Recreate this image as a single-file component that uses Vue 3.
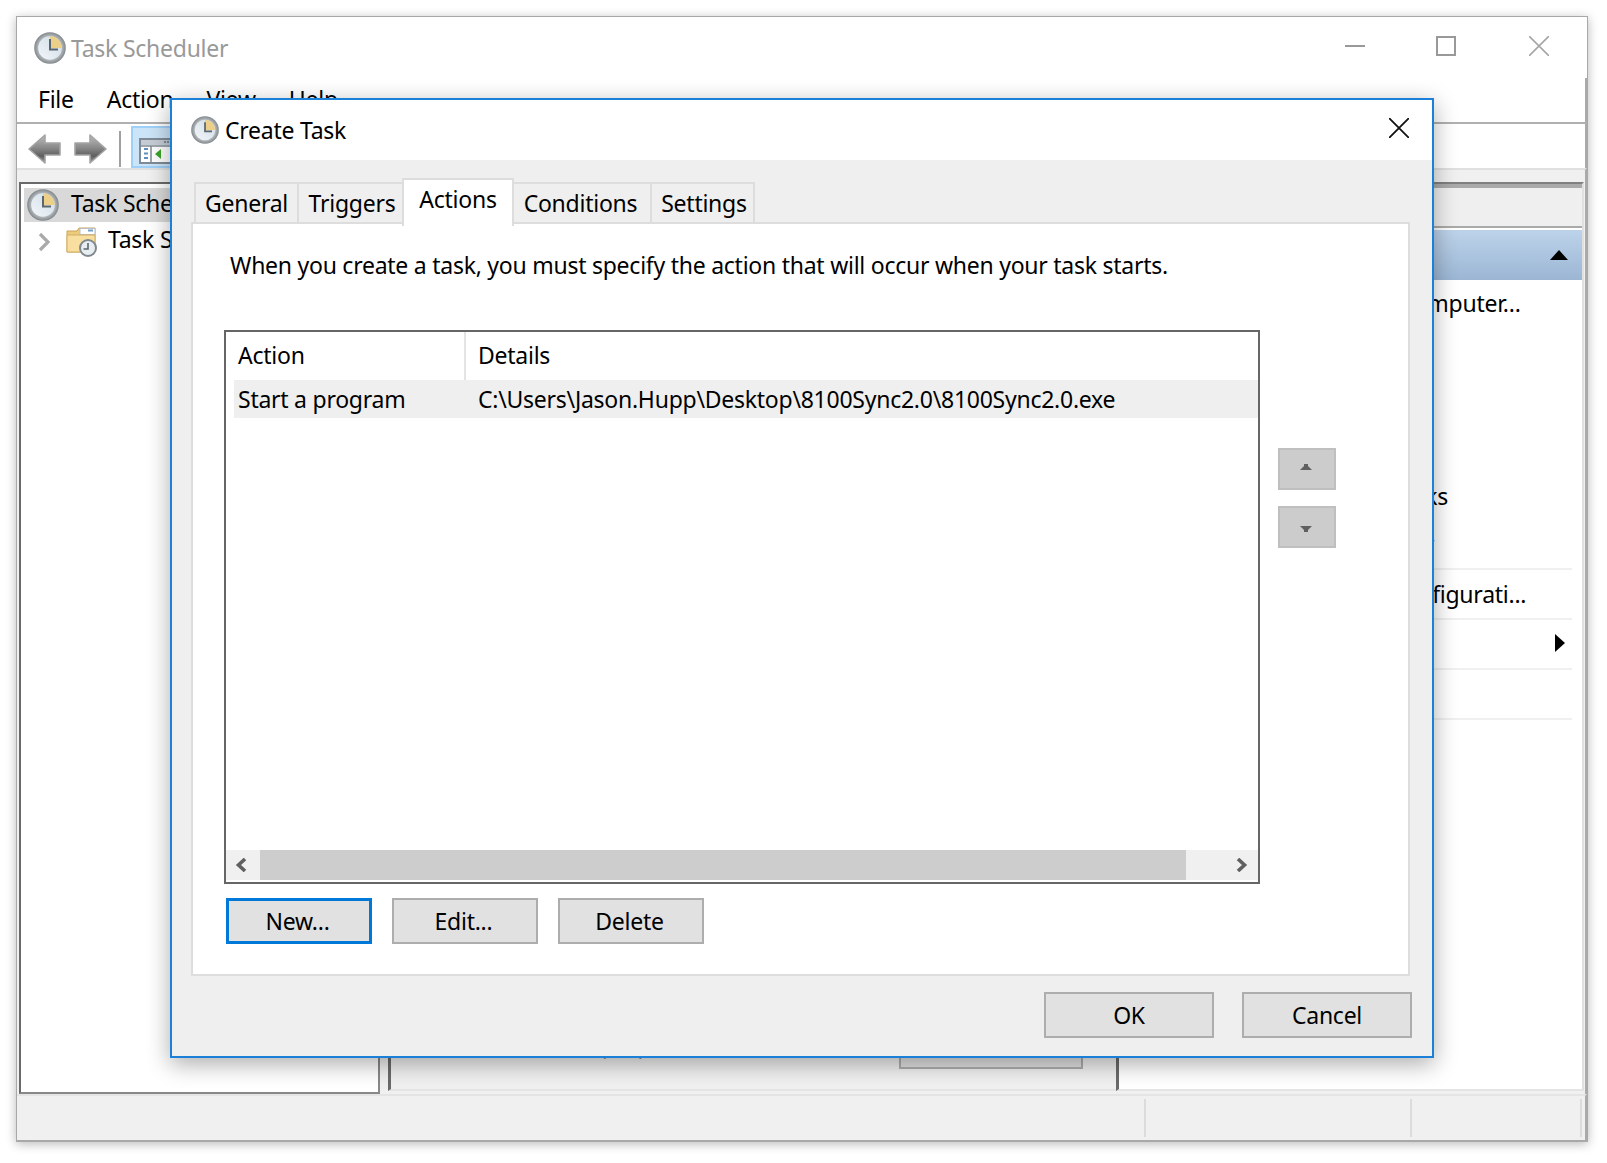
<script setup>
const menus = ['File', 'Action', 'View', 'Help']
const tabs = ['General', 'Triggers', 'Actions', 'Conditions', 'Settings']
const actions = [
  'Connect to Another Computer...',
  'Create Basic Task...',
  'Create Task...',
  'Import Task...',
  'Display All Running Tasks',
  'Enable All Tasks History',
]
</script>

<template>
  <div class="page">
    <div class="main">
      <div class="titlebar">
        <svg class="ico32" viewBox="0 0 32 32"><use href="#clk" /></svg>
        <span class="apptitle">Task Scheduler</span>
        <div class="winctl">
          <svg width="20" height="20" viewBox="0 0 20 20"><path d="M0 10H20" stroke="#999" stroke-width="2" /></svg>
          <svg width="20" height="20" viewBox="0 0 20 20"><rect x="1" y="1" width="18" height="18" fill="none" stroke="#999" stroke-width="2" /></svg>
          <svg width="20" height="20" viewBox="0 0 20 20"><path d="M0 0L20 20M20 0L0 20" stroke="#a6a6a6" stroke-width="1.6" /></svg>
        </div>
      </div>
      <div class="menubar">
        <span v-for="m in menus" :key="m" class="menu">{{ m }}</span>
      </div>
      <div class="toolbar">
        <svg class="arrow" width="33" height="30" viewBox="0 0 33 30"><path d="M1 15L17 1V9H32V21H17V29Z" fill="url(#arr)" stroke="#a4a4a4" stroke-width="1.6" stroke-linejoin="round" /></svg>
        <svg class="arrow fwd" width="33" height="30" viewBox="0 0 33 30"><path d="M32 15L16 1V9H1V21H16V29Z" fill="url(#arr)" stroke="#a4a4a4" stroke-width="1.6" stroke-linejoin="round" /></svg>
        <span class="tsep"></span>
        <span class="tbtn">
          <svg width="36" height="26" viewBox="0 0 36 26">
            <rect x="1" y="1" width="34" height="24" fill="#fff" stroke="#7f8b96" stroke-width="2" />
            <rect x="2" y="2" width="32" height="5" fill="#c5ccd4" />
            <path d="M25 4H33" stroke="#7f8b96" stroke-width="2" stroke-dasharray="2 1" />
            <path d="M2 8H34M12 8V24" stroke="#7f8b96" stroke-width="1.5" />
            <path d="M5 11H9M5 15.5H9M5 20H9" stroke="#5f8fc0" stroke-width="2.2" />
            <path d="M22 11V21L16 16Z" fill="#3aa52a" />
          </svg>
        </span>
      </div>
      <div class="strip"></div>
      <div class="panes">
        <div class="tree">
          <div class="node sel">
            <svg class="ico32" viewBox="0 0 32 32"><use href="#clk" /></svg>
            <span class="nodetext">Task Scheduler (Local)</span>
          </div>
          <div class="node child">
            <svg class="chev" width="12" height="20" viewBox="0 0 12 20"><path d="M2 2L10 10L2 18" fill="none" stroke="#a9a9a9" stroke-width="3.2" /></svg>
            <svg class="folder" width="32" height="30" viewBox="0 0 32 30">
              <path d="M1 4H11L13 1H29V25H1Z" fill="#eccb7c" stroke="#c9a557" />
              <rect x="14" y="1.5" width="15" height="6" fill="#fff" stroke="#b9bfc5" />
              <path d="M22 3.5H27" stroke="#6f9fce" stroke-width="2" />
              <path d="M1 8H29V25H1Z" fill="#f8dfa0" stroke="#d2ae62" />
              <circle cx="22" cy="21" r="8" fill="#e8edf1" stroke="#7f888f" stroke-width="2" />
              <path d="M22 16V22H17.5" fill="none" stroke="#5b666e" stroke-width="1.6" />
            </svg>
            <span class="nodetext">Task Scheduler Library</span>
          </div>
        </div>
        <div class="center">
          <div class="cfoot">
            <span class="refreshed">Last refreshed at 5/17/2018 11:32:05 AM</span>
            <span class="refreshbtn"></span>
          </div>
        </div>
        <div class="right">
          <div class="rhead"></div>
          <div class="rblue"><span class="tri-up"></span></div>
          <div class="rlist">
            <div v-for="a in actions" :key="a" class="ract">{{ a }}</div>
            <div class="ract2">AT Service Account Configurati...</div>
            <div class="ract2">View<span class="tri-right"></span></div>
            <div class="ract2">Refresh</div>
          </div>
        </div>
      </div>
      <div class="status">
        <span class="scell"></span><span class="scell"></span><span class="scell"></span>
      </div>
    </div>

    <div class="dialog">
      <div class="dtitle">
        <svg class="ico28" viewBox="0 0 32 32"><use href="#clk" /></svg>
        <span class="dtext">Create Task</span>
        <svg class="dclose" width="20" height="20" viewBox="0 0 20 20"><path d="M0 0L20 20M20 0L0 20" stroke="#111" stroke-width="1.8" /></svg>
      </div>
      <div class="dbody">
        <div class="tabs">
          <span v-for="t in tabs" :key="t" class="tab" :class="{ on: t === 'Actions' }">{{ t }}</span>
        </div>
        <div class="tabpanel">
          <p class="intro">When you create a task, you must specify the action that will occur when your task starts.</p>
          <div class="listrow">
            <div class="list">
              <div class="lhead">
                <span class="c1">Action</span>
                <span class="c2">Details</span>
              </div>
              <div class="lrow">
                <span class="c1">Start a program</span>
                <span class="c2">C:\Users\Jason.Hupp\Desktop\8100Sync2.0\8100Sync2.0.exe</span>
              </div>
              <div class="lspace"></div>
              <div class="hscroll">
                <svg class="sarrow" width="12" height="14" viewBox="0 0 12 14"><path d="M10 1L3.5 7L10 13" fill="none" stroke="#606060" stroke-width="3.6" /></svg>
                <div class="thumb"></div>
                <svg class="sarrow" width="12" height="14" viewBox="0 0 12 14"><path d="M2 1L8.5 7L2 13" fill="none" stroke="#606060" stroke-width="3.6" /></svg>
              </div>
            </div>
            <div class="updown">
              <span class="ud up"><svg width="12" height="6" viewBox="0 0 12 6"><path d="M0 6L4 2V0H8V2L12 6Z" fill="#606060" /></svg></span>
              <span class="ud down"><svg width="12" height="6" viewBox="0 0 12 6"><path d="M0 0H12L8 4V6H4V4Z" fill="#606060" /></svg></span>
            </div>
          </div>
          <div class="actbtns">
            <span class="btn small focus">New...</span>
            <span class="btn small">Edit...</span>
            <span class="btn small">Delete</span>
          </div>
        </div>
        <div class="dfoot">
          <span class="btn big">OK</span>
          <span class="btn big">Cancel</span>
        </div>
      </div>
    </div>

    <svg class="defs" width="0" height="0">
      <defs>
        <radialGradient id="ring" cx="50%" cy="50%" r="50%">
          <stop offset="0.72" stop-color="#b9bfc3" />
          <stop offset="1" stop-color="#80868a" />
        </radialGradient>
        <linearGradient id="face" x1="0" y1="1" x2="1" y2="0">
          <stop offset="0" stop-color="#f2f6f9" />
          <stop offset="1" stop-color="#cfdbe6" />
        </linearGradient>
        <linearGradient id="arr" x1="0" y1="0" x2="0" y2="1">
          <stop offset="0" stop-color="#bdbdbd" />
          <stop offset="0.45" stop-color="#8a8a8a" />
          <stop offset="0.75" stop-color="#5f5f5f" />
          <stop offset="1" stop-color="#9a9a9a" />
        </linearGradient>
        <symbol id="clk" viewBox="0 0 32 32">
          <circle cx="16" cy="16" r="15.8" fill="url(#ring)" />
          <circle cx="16" cy="16" r="11.8" fill="url(#face)" />
          <path d="M16 4.2A11.8 11.8 0 0 1 27.8 16H16Z" fill="#ecd08a" />
          <path d="M16 7V17.5H24" fill="none" stroke="#5b666e" stroke-width="2" />
        </symbol>
      </defs>
    </svg>
  </div>
</template>

<style>
html, body { margin: 0; background: #fff; }
</style>

<style scoped>
.page {
  position: relative;
  width: 1607px;
  height: 1163px;
  padding: 16px 19px 21px 16px;
  box-sizing: border-box;
  overflow: hidden;
  background: #fff;
  font-family: "Noto Sans", "Open Sans", sans-serif;
  font-size: 23px;
  letter-spacing: -0.25px;
  color: #000;
}
.defs { position: absolute; }
.main {
  height: 100%;
  display: flex;
  flex-direction: column;
  border: 1px solid #a8a8a8;
  border-bottom-width: 2px;
  box-sizing: border-box;
  background: #fff;
  box-shadow: 0 2px 10px rgba(0,0,0,.28);
}
.titlebar {
  height: 61px;
  display: flex;
  align-items: center;
  padding-left: 17px;
  flex: none;
}
.ico32 { width: 32px; height: 32px; flex: none; }
.ico28 { width: 28px; height: 28px; flex: none; }
.apptitle { margin-left: 5px; color: #999; }
.winctl {
  margin-left: auto;
  margin-right: 38px;
  margin-top: -3px;
  display: flex;
  gap: 73px;
}
.winctl svg:first-child { margin-right: -2px; }
.menubar {
  height: 44px;
  flex: none;
  display: flex;
  align-items: center;
  padding-left: 21px;
  gap: 33px;
  border-right: 2px solid #aaa;
  box-sizing: border-box;
}
.menu { position: relative; top: -1px; }
.toolbar {
  height: 46px;
  flex: none;
  display: flex;
  align-items: center;
  box-sizing: border-box;
  padding-left: 11px;
  border-top: 2px solid #b0b0b0;
  border-right: 2px solid #aaa;
}
.arrow { margin-top: 6px; }
.fwd { margin-left: 13px; }
.tsep { width: 2px; height: 36px; background: #a0a0a0; margin-left: 12px; margin-top: 5px; }
.tbtn {
  margin-left: 10px;
  margin-top: 2px;
  height: 42px;
  width: 60px;
  box-sizing: border-box;
  background: #cce4f7;
  border: 2px solid #9fd0f7;
  display: flex;
  align-items: flex-end;
  padding: 0 0 2px 6px;
}
.strip {
  height: 14px;
  flex: none;
  box-sizing: border-box;
  background: #f0f0f0;
  border-top: 2px solid #e0e0e0;
  border-right: 2px solid #aaa;
}
.panes {
  flex: 1;
  min-height: 0;
  display: flex;
  background: #f0f0f0;
  padding-left: 2px;
  border-right: 2px solid #aaa;
}
.tree {
  width: 361px;
  flex: none;
  box-sizing: border-box;
  background: #fff;
  border-top: 2px solid #6a6a6a;
  border-left: 2px solid #6a6a6a;
  border-right: 2px solid #888;
  border-bottom: 2px solid #888;
  padding: 4px 0 0 3px;
}
.node {
  height: 34px;
  display: flex;
  align-items: center;
  white-space: nowrap;
}
.node.sel { background: #d9d9d9; padding-left: 3px; }
.nodetext { margin-left: 12px; margin-bottom: 4px; }
.node.child { padding-left: 14px; height: 36px; margin-top: 1px; }
.chev { margin-right: 17px; margin-top: 2px; }
.folder { margin-top: 2px; margin-left: -1px; }
.node.child .nodetext { margin-left: 10px; }
.center {
  width: 728px;
  flex: none;
  margin-left: 8px;
  box-sizing: border-box;
  background: #f0f0f0;
  border-left: 3px solid #6a6a6a;
  border-bottom: 2px solid #e4e4e4;
  margin-bottom: 3px;
  display: flex;
  flex-direction: column;
  justify-content: flex-end;
}
.cfoot {
  display: flex;
  padding-left: 5px;
  height: 42px;
  position: relative;
}
.refreshed {
  white-space: nowrap;
  line-height: 20px;
  margin-top: -7px;
  font-family: "DejaVu Sans", sans-serif;
  font-size: 22px;
  letter-spacing: 0;
  color: #1c1450;
}
.refreshbtn {
  position: absolute;
  left: 508px;
  top: -40px;
  width: 184px;
  height: 62px;
  box-sizing: border-box;
  background: #e1e1e1;
  border: 2px solid #adadad;
}
.right {
  flex: 1;
  box-sizing: border-box;
  background: #fff;
  border-left: 3px solid #6a6a6a;
  margin-right: 1px;
  display: flex;
  flex-direction: column;
  border-top: 2px solid #808080;
  border-right: 2px solid #e0e0e0;
  border-bottom: 2px solid #e4e4e4;
  margin-bottom: 3px;
}
.rhead {
  height: 44px;
  flex: none;
  box-sizing: border-box;
  background: #efefef;
  border-top: 4px solid #aaa;
  border-bottom: 2px solid #aaa;
}
.rblue {
  height: 50px;
  flex: none;
  margin-top: 2px;
  background: linear-gradient(#bdd3ea, #9bb6d4);
  display: flex;
  align-items: center;
  justify-content: flex-end;
  padding-right: 14px;
  box-sizing: border-box;
}
.tri-up {
  width: 0; height: 0;
  border-left: 9px solid transparent;
  border-right: 9px solid transparent;
  border-bottom: 10px solid #000;
}
.tri-right {
  position: absolute;
  right: 7px;
  top: 14px;
  width: 0; height: 0;
  border-top: 9px solid transparent;
  border-bottom: 9px solid transparent;
  border-left: 10px solid #000;
}
.rlist { padding: 0 10px 0 0; }
.ract {
  height: 48.25px;
  line-height: 46px;
  padding-left: 68px;
  white-space: nowrap;
  box-sizing: border-box;
}
.ract:nth-child(5) { padding-left: 63px; }
.ract:nth-child(6) { border-bottom: 2px solid #f0f0f0; }
.ract2 {
  height: 50px;
  line-height: 48px;
  padding-left: 68px;
  white-space: nowrap;
  position: relative;
  box-sizing: border-box;
  border-bottom: 2px solid #f0f0f0;
}
.status {
  height: 46px;
  flex: none;
  display: flex;
  justify-content: flex-end;
  box-sizing: border-box;
  background: #f0f0f0;
  border-top: 2px solid #e4e4e4;
  border-right: 2px solid #aaa;
  padding: 3px 3px 3px 0;
}
.scell { border-left: 2px solid #dcdcdc; width: 0; }
.scell:nth-child(1) { margin-right: 264px; }
.scell:nth-child(2) { margin-right: 168px; }

.dialog {
  position: absolute;
  left: 170px;
  top: 98px;
  width: 1264px;
  height: 960px;
  box-sizing: border-box;
  display: flex;
  flex-direction: column;
  border: 2px solid #1a80d8;
  background: #fff;
  box-shadow: 0 6px 22px rgba(0,0,0,.33);
}
.dtitle {
  height: 60px;
  flex: none;
  display: flex;
  align-items: center;
  padding-left: 19px;
  background: #fff;
}
.dtext { margin-left: 6px; }
.dclose { margin-left: auto; margin-right: 23px; margin-top: -4px; }
.dbody {
  flex: 1;
  display: flex;
  flex-direction: column;
  background: #efefef;
  padding: 18px 22px 0 19px;
  min-height: 0;
}
.tabs {
  height: 46px;
  flex: none;
  display: flex;
  align-items: flex-end;
  margin-left: 3px;
  position: relative;
  z-index: 1;
}
.tab {
  height: 42px;
  box-sizing: border-box;
  line-height: 39px;
  text-align: center;
  border: 2px solid #ddd;
  border-bottom: 0;
  margin-left: -2px;
  white-space: nowrap;
}
.tab:nth-child(1) { width: 105px; margin-left: 0; }
.tab:nth-child(2) { width: 107px; padding-left: 3px; }
.tab:nth-child(3) { width: 112px; }
.tab:nth-child(4) { width: 140px; padding-right: 3px; }
.tab:nth-child(5) { width: 105px; padding-left: 3px; }
.tab.on {
  height: 48px;
  margin-bottom: -2px;
  background: #fff;
  line-height: 39px;
  position: relative;
  z-index: 1;
}
.tabpanel {
  height: 754px;
  flex: none;
  box-sizing: border-box;
  margin-top: -2px;
  background: #fff;
  border: 2px solid #ddd;
  padding: 24px 0 0 31px;
}
.intro { margin: 0 0 0 6px; line-height: 34px; height: 34px; white-space: nowrap; }
.listrow {
  display: flex;
  gap: 18px;
  margin-top: 48px;
}
.list {
  width: 1036px;
  height: 554px;
  box-sizing: border-box;
  border: 2px solid #666;
  display: flex;
  flex-direction: column;
  background: #fff;
}
.lhead {
  height: 48px;
  flex: none;
  display: flex;
  align-items: center;
}
.lrow {
  height: 38px;
  flex: none;
  margin-left: 8px;
  display: flex;
  align-items: center;
  background: #efefef;
  white-space: nowrap;
}
.lhead .c1 { width: 240px; padding-left: 12px; box-sizing: border-box; border-right: 2px solid #e4e4e4; line-height: 46px; height: 48px; }
.lhead .c2 { padding-left: 12px; line-height: 46px; height: 48px; }
.lrow .c1 { width: 232px; padding-left: 4px; box-sizing: border-box; }
.lrow .c2 { padding-left: 12px; }
.lspace { flex: 1; }
.hscroll {
  height: 30px;
  flex: none;
  display: flex;
  align-items: center;
  margin-bottom: 2px;
  background: #f0f0f0;
}
.sarrow { flex: none; }
.sarrow:first-child { margin: 0 13px 0 9px; }
.sarrow:last-child { margin: 0 10px 0 auto; }
.thumb { width: 926px; height: 30px; background: #cdcdcd; flex: none; }
.updown {
  display: flex;
  flex-direction: column;
  gap: 16px;
  margin-top: 118px;
}
.ud {
  width: 58px;
  height: 42px;
  box-sizing: border-box;
  background: #ccc;
  border: 2px solid #bfbfbf;
  display: flex;
  align-items: center;
  justify-content: center;
}
.ud svg { margin-right: 2px; }
.ud.up svg { margin-bottom: 4px; }
.ud.down svg { margin-top: 4px; }
.actbtns {
  display: flex;
  gap: 20px;
  margin-top: 14px;
  margin-left: 2px;
}
.btn {
  box-sizing: border-box;
  display: flex;
  align-items: center;
  justify-content: center;
  background: #e1e1e1;
  border: 2px solid #adadad;
  padding-bottom: 1px;
}
.btn.small { width: 146px; height: 46px; padding-right: 3px; }
.btn.big { width: 170px; height: 46px; }
.btn.focus { border: 3px solid #0078d7; }
.dfoot {
  display: flex;
  justify-content: flex-end;
  gap: 28px;
  margin-top: 16px;
  margin-right: -2px;
}
</style>
